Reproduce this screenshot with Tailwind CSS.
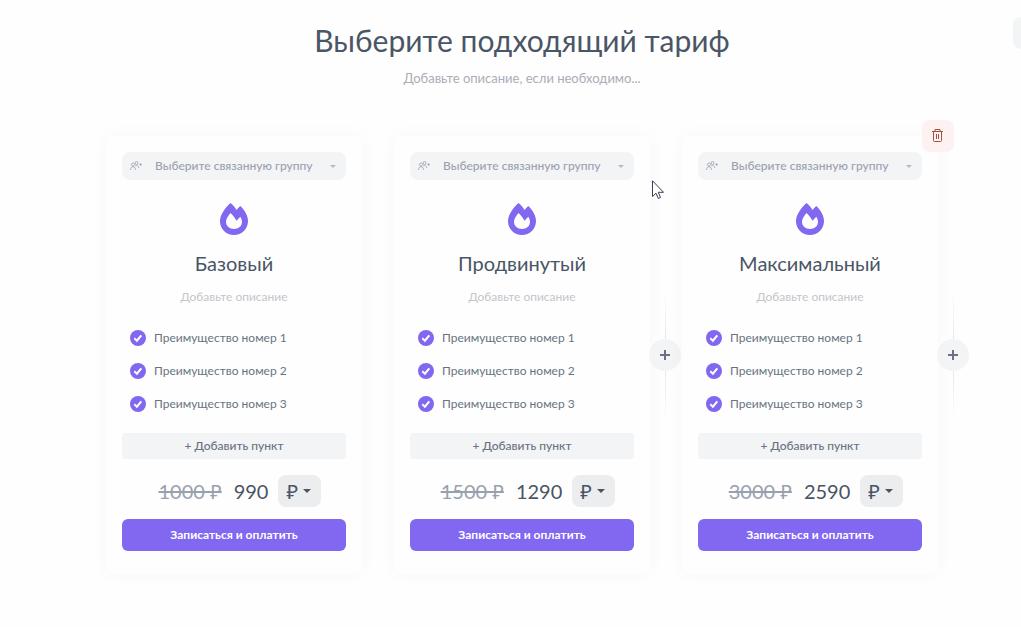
<!DOCTYPE html>
<html lang="ru">
<head>
<meta charset="utf-8">
<title>Тарифы</title>
<script src="https://cdn.jsdelivr.net/npm/@tailwindcss/browser@4"></script>
</head>
<body class="relative min-h-screen overflow-x-hidden bg-[#fefefe] font-['Lato','Noto_Sans',sans-serif] text-gray-600">
<svg class="hidden">
  <symbol id="flame" viewBox="0 0 28 32"><path fill="currentColor" fill-rule="evenodd" d="M10.500 0C13 2 14.900 4.400 16.500 7C17.500 5.600 18.800 4.200 20.300 3C24.500 7 28 12.500 28 18C28 26 21.800 32 14 32S0 26 0 18C0 12.500 4.500 5.200 10.500 0ZM10.500 10C8 12.800 6 16 6 18.800C6 23.200 9.500 26 14 26S22 23.200 22 18.800C22 17.300 21.300 15.500 20.300 13.800L16.500 17.800C15 15 13 12.300 10.500 10Z"/></symbol>
  <symbol id="check" viewBox="0 0 16 16"><circle cx="8" cy="8" r="8" fill="#8267f1"/><path d="M4.300 8.300L6.900 10.700L11.300 5.300" fill="none" stroke="#fff" stroke-width="2"/></symbol>
  <symbol id="people" viewBox="0 0 12 10"><g fill="none" stroke="currentColor" stroke-width=".8"><circle cx="3" cy="3.500" r="1.500"/><path d="M.5 9C.6 6.700 1.500 5.800 3 5.800S5.300 6.700 5.500 9"/><circle cx="6.500" cy="2" r="1.500"/><path d="M5.200 5C6.800 4 8.700 4.800 9 7"/><path d="M9.300 3.500H12M10.650 2.200V4.800"/></g></symbol>
  <symbol id="caret" viewBox="0 0 8 4"><path d="M0 0H8L4 4Z" fill="currentColor"/></symbol>
  <symbol id="plus" viewBox="0 0 10 10"><path d="M5 0V10M0 5H10" stroke="currentColor" stroke-width="2"/></symbol>
</svg>
<main class="flex flex-col items-center pt-5 pb-10 pl-[23px]">
  <h1 class="text-[30px] leading-10">Выберите подходящий тариф</h1>
  <input aria-label="Описание" placeholder="Добавьте описание, если необходимо..." class="mt-2 h-5 w-96 text-center text-[13px] outline-none placeholder:text-[#a9adb6]">
  <div id="plans" class="mt-12 flex justify-center gap-8"></div>
</main>
<button aria-label="Открыть панель" class="absolute top-[17px] right-0 h-8 w-2 rounded-l-lg bg-gray-100"></button>
<svg class="absolute top-[180px] left-[652px] h-5 w-3" viewBox="0 0 12 20"><path d="M.5 .8V16.500L4 13.200L6.300 18.500L8.500 17.500L6.300 12.300H11.500Z" fill="#fff" stroke="#374151"/></svg>
<script>
const plans = [
  {name: 'Базовый', old: 1000, price: 990},
  {name: 'Продвинутый', old: 1500, price: 1290, add: true},
  {name: 'Максимальный', old: 3000, price: 2590, add: true, remove: true}
];
document.getElementById('plans').innerHTML = plans.map((p, i) => `
<section class="relative flex w-64 flex-col items-center rounded-lg bg-[#fefefe] p-4 pb-[23px] shadow-[0_0_20px_rgba(0,0,0,0.03)]">
  <label class="relative flex w-full items-center text-gray-400">
    <svg class="absolute left-2 h-2.5 w-3"><use href="#people"/></svg>
    <select aria-label="Связанная группа" class="h-7 w-full appearance-none rounded-lg bg-gray-100 pr-6 pl-[33px] text-[12px] font-medium"><option>Выберите связанную группу</option></select>
    <svg class="absolute right-2.5 h-[3px] w-1.5 text-[#b3b8c1]"><use href="#caret"/></svg>
  </label>
  <svg class="mt-[23px] h-8 w-7 text-[#8267f1]"><use href="#flame"/></svg>
  <h2 class="mt-3.5 text-[20px] leading-7">${p.name}</h2>
  <input aria-label="Описание тарифа" placeholder="Добавьте описание" class="mt-[9px] h-5 w-full text-center text-[12px] outline-none placeholder:text-[#c3c6cb]">
  <ul class="mt-6 flex w-full flex-col gap-[17px] px-2 text-[12px] leading-4 text-gray-500">
    ${[1, 2, 3].map(n => `<li class="flex items-center gap-2"><svg class="size-4"><use href="#check"/></svg>Преимущество номер ${n}</li>`).join('')}
  </ul>
  <button class="mt-[21px] h-[26px] w-full rounded bg-gray-100 text-[12px] font-medium text-gray-500">+ Добавить пункт</button>
  <div class="mt-4 flex h-8 items-center pl-3 text-[20px] leading-7">
    <s class="text-gray-400">${p.old} ₽</s>
    <span class="ml-3">${p.price}</span>
    <label class="relative ml-2.5 flex items-center"><select aria-label="Валюта" class="h-8 w-[43px] appearance-none rounded-lg bg-[#ecedef] pl-2"><option>₽</option></select><svg class="pointer-events-none absolute right-2.5 h-1 w-2"><use href="#caret"/></svg></label>
  </div>
  <button class="mt-3 h-8 w-full rounded-md bg-[#8267f1] text-[12px] font-bold text-white">Записаться и оплатить</button>
  ${p.remove ? `<button aria-label="Удалить тариф" class="absolute -top-4 -right-4 flex size-8 items-center justify-center rounded-lg bg-[#fdf1f1] text-[#a4503f]"><svg class="size-3.5" viewBox="0 0 14 14" fill="none" stroke="currentColor"><path d="M1 2.500H12M4 2.500V.5H9V2.500M2.500 2.500V11.500Q2.500 12.500 3.500 12.500H9.500Q10.500 12.500 10.500 11.500V2.500M5.500 5V10M7.500 5V10"/></svg></button>` : ''}
  ${p.add ? `<div class="absolute top-1/2 -right-[31px] flex -translate-y-1/2 flex-col items-center"><div class="h-[50px] w-px bg-linear-to-t from-gray-200 to-transparent"></div><button aria-label="Добавить тариф" class="flex size-8 items-center justify-center rounded-full bg-gray-100 text-gray-500"><svg class="size-2.5"><use href="#plus"/></svg></button><div class="h-[50px] w-px bg-linear-to-b from-gray-200 to-transparent"></div></div>` : ''}
</section>`).join('');
</script>
</body>
</html>
